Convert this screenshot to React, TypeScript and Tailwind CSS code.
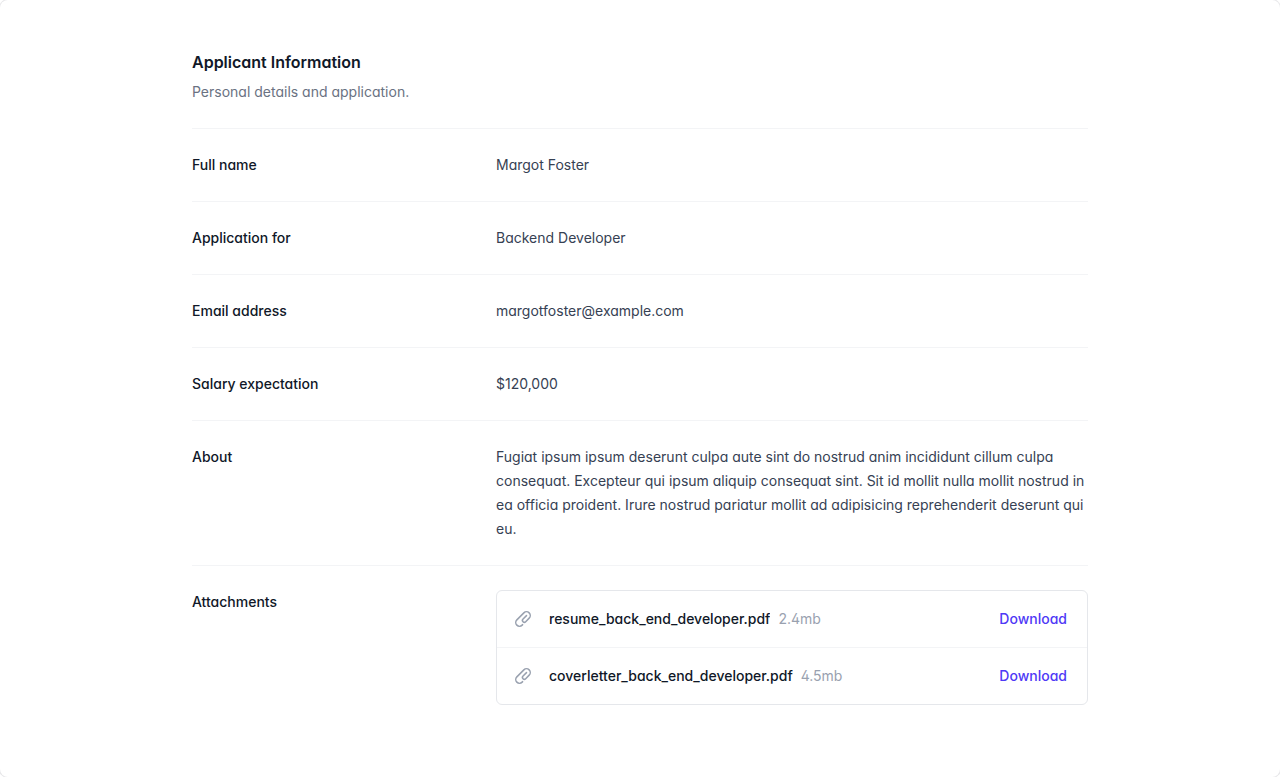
import type { ReactNode } from 'react'

const details = [
  { label: 'Full name', value: 'Margot Foster' },
  { label: 'Application for', value: 'Backend Developer' },
  { label: 'Email address', value: 'margotfoster@example.com' },
  { label: 'Salary expectation', value: '$120,000' },
  {
    label: 'About',
    value:
      'Fugiat ipsum ipsum deserunt culpa aute sint do nostrud anim incididunt cillum culpa consequat. Excepteur qui ipsum aliquip consequat sint. Sit id mollit nulla mollit nostrud in ea officia proident. Irure nostrud pariatur mollit ad adipisicing reprehenderit deserunt qui eu.',
  },
]

const files = [
  { name: 'resume_back_end_developer.pdf', size: '2.4mb' },
  { name: 'coverletter_back_end_developer.pdf', size: '4.5mb' },
]

function PaperClipIcon() {
  return (
    <svg viewBox="0 0 20 20" fill="currentColor" aria-hidden="true" className="size-5 shrink-0 text-gray-400">
      <path
        fillRule="evenodd"
        clipRule="evenodd"
        d="M15.621 4.379a3 3 0 0 0-4.242 0l-7 7a3 3 0 0 0 4.241 4.243h.001l.497-.5a.75.75 0 0 1 1.064 1.057l-.498.501-.002.002a4.5 4.5 0 0 1-6.364-6.364l7-7a4.5 4.5 0 0 1 6.368 6.36l-3.455 3.553A2.625 2.625 0 1 1 9.52 9.52l3.45-3.451a.75.75 0 1 1 1.061 1.06l-3.45 3.451a1.125 1.125 0 0 0 1.587 1.595l3.454-3.553a3 3 0 0 0 0-4.242Z"
      />
    </svg>
  )
}

function Row({ label, children, list = false }: { label: string; children: ReactNode; list?: boolean }) {
  return (
    <div className="py-6 sm:grid sm:grid-cols-3 sm:gap-4">
      <dt className="text-sm leading-6 font-medium text-gray-900">{label}</dt>
      <dd className={list ? 'mt-2 text-sm sm:col-span-2 sm:mt-0' : 'mt-1 text-sm leading-6 text-gray-700 sm:col-span-2 sm:mt-0'}>
        {children}
      </dd>
    </div>
  )
}

export default function App() {
  return (
    <main className="min-h-screen rounded-lg bg-white px-4 py-12 font-['Inter',sans-serif] antialiased ring-1 ring-gray-900/10 [font-feature-settings:'cv02','cv03','cv04','cv11']">
      <div className="mx-auto max-w-4xl">
        <header>
          <h1 className="text-base leading-7 font-semibold text-gray-900">Applicant Information</h1>
          <p className="mt-1 text-sm leading-6 text-gray-500">Personal details and application.</p>
        </header>
        <dl className="mt-6 divide-y divide-gray-100 border-t border-gray-100">
          {details.map(({ label, value }) => (
            <Row key={label} label={label}>
              {value}
            </Row>
          ))}
          <Row label="Attachments" list>
            <ul className="divide-y divide-gray-100 rounded-md border border-gray-200">
              {files.map(({ name, size }) => (
                <li key={name} className="flex items-center justify-between py-4 pr-5 pl-4 leading-6">
                  <div className="flex min-w-0 flex-1 items-center">
                    <PaperClipIcon />
                    <div className="ml-4 flex min-w-0 flex-1 gap-2">
                      <span className="truncate font-medium text-gray-900">{name}</span>
                      <span className="shrink-0 text-gray-400">{size}</span>
                    </div>
                  </div>
                  <a href="#" className="ml-4 shrink-0 font-medium text-indigo-600">
                    Download
                  </a>
                </li>
              ))}
            </ul>
          </Row>
        </dl>
      </div>
    </main>
  )
}
